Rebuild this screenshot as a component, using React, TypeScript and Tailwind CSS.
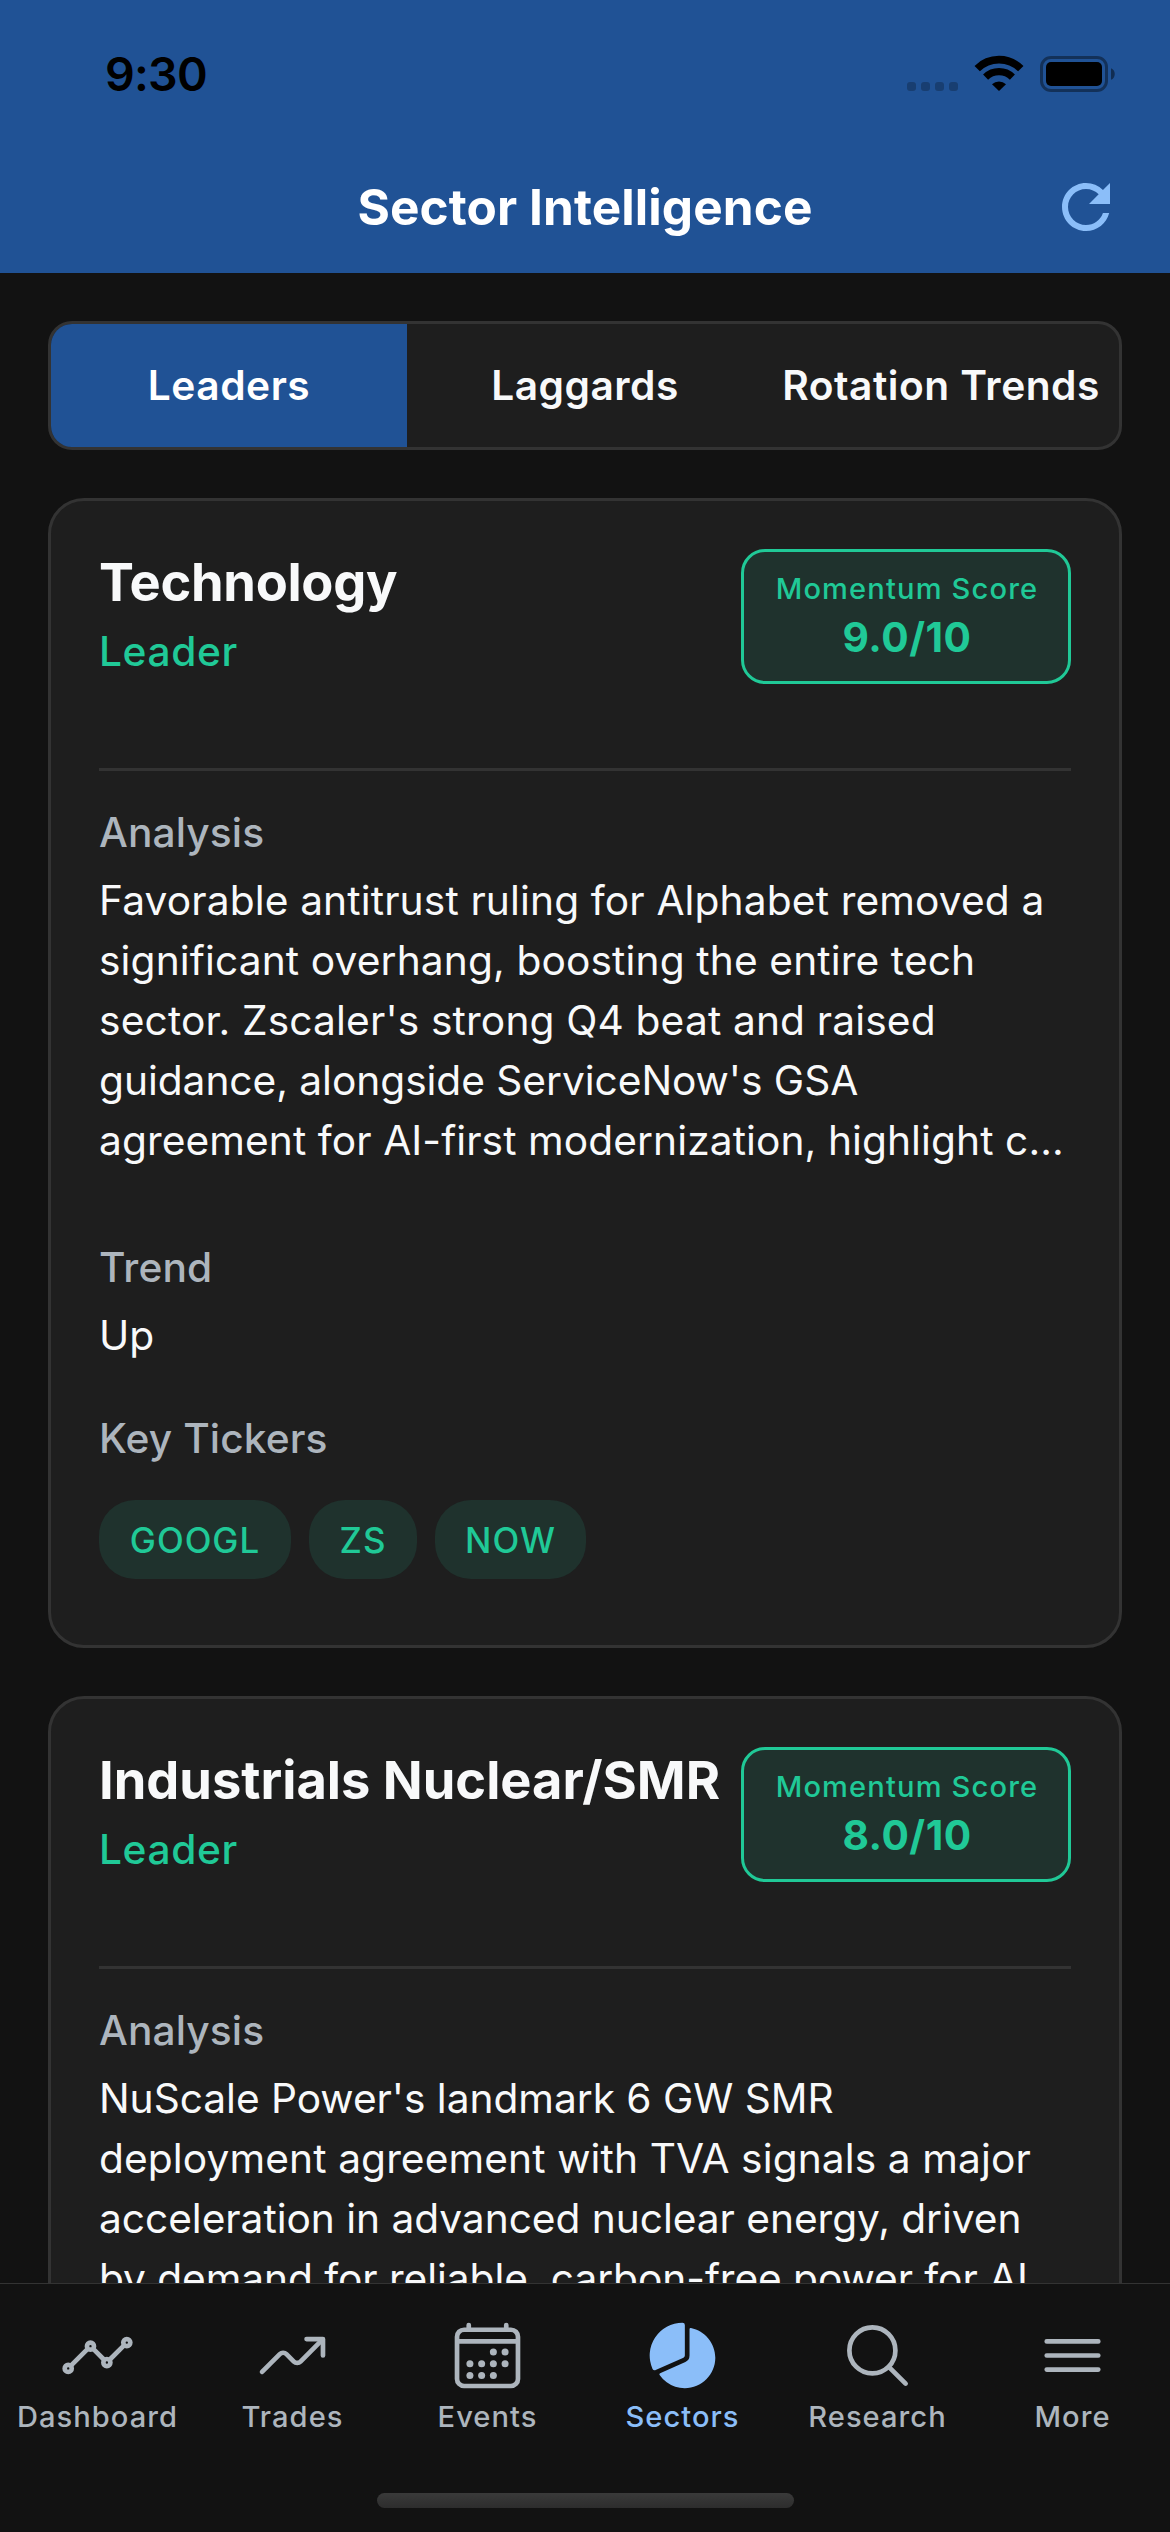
import type { ReactNode } from "react";
import {
  IoAnalyticsOutline,
  IoCalendarOutline,
  IoMenuOutline,
  IoPieChart,
  IoSearchOutline,
  IoTrendingUpOutline,
} from "react-icons/io5";
import { MdRefresh } from "react-icons/md";

type Line = { text: string; spacing: string };
type Ticker = { symbol: string; width: string };
type Sector = {
  name: string;
  nameSpacing: string;
  score: string;
  analysis: Line[];
  trend?: string;
  tickers?: Ticker[];
};

const sectors: Sector[] = [
  {
    name: "Technology",
    nameSpacing: "tracking-[-0.3px]",
    score: "9.0/10",
    analysis: [
      { text: "Favorable antitrust ruling for Alphabet removed a", spacing: "tracking-[0.13px]" },
      { text: "significant overhang, boosting the entire tech", spacing: "tracking-[0.12px]" },
      { text: "sector. Zscaler's strong Q4 beat and raised", spacing: "tracking-[0.15px]" },
      { text: "guidance, alongside ServiceNow's GSA", spacing: "tracking-[-0.05px]" },
      { text: "agreement for AI-first modernization, highlight c...", spacing: "tracking-[0.08px]" },
    ],
    trend: "Up",
    tickers: [
      { symbol: "GOOGL", width: "w-[192px]" },
      { symbol: "ZS", width: "w-[108px]" },
      { symbol: "NOW", width: "w-[151px]" },
    ],
  },
  {
    name: "Industrials Nuclear/SMR",
    nameSpacing: "tracking-[0px]",
    score: "8.0/10",
    analysis: [
      { text: "NuScale Power's landmark 6 GW SMR", spacing: "tracking-[-0.04px]" },
      { text: "deployment agreement with TVA signals a major", spacing: "tracking-[0.1px]" },
      { text: "acceleration in advanced nuclear energy, driven", spacing: "tracking-[-0.05px]" },
      { text: "by demand for reliable, carbon-free power for AI", spacing: "tracking-[-0.07px]" },
    ],
  },
];

function StatusBar() {
  return (
    <div className="flex h-[141px] items-start justify-between pt-[44px] pr-[53px] pl-[105px] text-black">
      <span className="text-[46.6px] leading-[60px] font-semibold tracking-[-0.77px]">9:30</span>
      <div className="flex pt-[11px]">
        <svg className="h-[37px] w-[52px]" viewBox="0 0 52 37" fill="#000" fillOpacity="0.24">
          {[0, 14, 28, 42].map((x) => (
            <rect key={x} x={x} y="27" width="9" height="9" rx="3" />
          ))}
        </svg>
        <svg className="ml-[15px] h-[37px] w-[50px]" viewBox="0 0 50 37" fill="none" stroke="#000">
          <path d="M3.2 13.6A31 31 0 0 1 46.8 13.6" strokeWidth="7.6" />
          <path d="M11.6 22.1A19.2 19.2 0 0 1 38.4 22.1" strokeWidth="7.2" />
          <path d="M18 29.2A10.4 10.4 0 0 1 32 29.2L25 36Z" fill="#000" stroke="none" />
        </svg>
        <svg className="ml-[16px] h-[38px] w-[77px]" viewBox="0 0 77 38">
          <rect x="1.5" y="2.5" width="65" height="33" rx="9.5" fill="none" stroke="#000" strokeOpacity="0.4" strokeWidth="3" />
          <rect x="6" y="7" width="56" height="24" rx="5" fill="#000" />
          <path d="M71 13.2C76 15 76 23 71 24.8Z" fill="#000" fillOpacity="0.45" />
        </svg>
      </div>
    </div>
  );
}

function Header() {
  return (
    <header className="h-[273px] shrink-0 bg-[#205295]">
      <StatusBar />
      <div className="grid h-[132px] grid-cols-[120px_1fr_120px] items-center">
        <h1 className="col-start-2 text-center text-[49.5px] leading-[66px] font-bold tracking-[0.1px] text-white">
          Sector Intelligence
        </h1>
        <MdRefresh className="size-[72px] text-[#8bbef9]" />
      </div>
    </header>
  );
}

function SegmentedControl() {
  return (
    <div className="grid h-[129px] shrink-0 grid-cols-3 items-stretch overflow-hidden rounded-[24px] border-[3px] border-[#333] bg-[#1e1e1e] text-[40.7px] font-semibold tracking-[0.5px] whitespace-nowrap text-[#f8f9fa]">
      <button className="bg-[#205295] text-center text-white">Leaders</button>
      <button className="text-center">Laggards</button>
      <button className="text-center">Rotation Trends</button>
    </div>
  );
}

function Label({ children }: { children: ReactNode }) {
  return (
    <h3 className="text-[40.7px] leading-[60px] font-medium tracking-[0.1px] text-[#adb5bd]">{children}</h3>
  );
}

function SectorCard({ sector }: { sector: Sector }) {
  return (
    <section className="h-[1150px] shrink-0 rounded-[36px] border-[3px] border-[#333] bg-[#1e1e1e] px-12 pt-12 text-[#f8f9fa]">
      <div className="flex h-[222px] items-start justify-between border-b-[3px] border-[#333]">
        <div className="whitespace-nowrap">
          <h2 className={`text-[52.4px] leading-[66px] font-bold ${sector.nameSpacing}`}>{sector.name}</h2>
          <p className="mt-[7px] text-[40.7px] leading-[60px] font-medium tracking-[0.6px] text-[#20c997]">Leader</p>
        </div>
        <div className="h-[135px] w-[330px] shrink-0 rounded-[24px] border-[3px] border-[#20c997] bg-[#1f322d] pt-[13px] pl-[2px] text-center text-[#20c997]">
          <div className="text-[29.1px] leading-[48px] font-medium tracking-[1.15px]">Momentum Score</div>
          <div className="mt-px text-[40.7px] leading-[48px] font-bold tracking-[0.5px]">{sector.score}</div>
        </div>
      </div>

      <div className="mt-8">
        <Label>Analysis</Label>
        <div className="mt-2 text-[40.7px] leading-[60px]">
          {sector.analysis.map((line) => (
            <div key={line.text} className={`whitespace-nowrap ${line.spacing}`}>
              {line.text}
            </div>
          ))}
        </div>
      </div>

      {sector.trend && (
        <div className="mt-[67px]">
          <Label>Trend</Label>
          <div className="mt-2 text-[40.7px] leading-[60px]">{sector.trend}</div>
        </div>
      )}

      {sector.tickers && (
        <div className="mt-[43px]">
          <Label>Key Tickers</Label>
          <div className="mt-[31px] flex gap-[18px]">
            {sector.tickers.map((t) => (
              <span
                key={t.symbol}
                className={`flex h-[79px] items-center justify-center rounded-[36px] bg-[#1f322d] pt-px text-[34.9px] font-medium tracking-[1px] text-[#20c997] ${t.width}`}
              >
                {t.symbol}
              </span>
            ))}
          </div>
        </div>
      )}
    </section>
  );
}

const tabs = [
  { label: "Dashboard", Icon: IoAnalyticsOutline, active: false },
  { label: "Trades", Icon: IoTrendingUpOutline, active: false },
  { label: "Events", Icon: IoCalendarOutline, active: false },
  { label: "Sectors", Icon: IoPieChart, active: true },
  { label: "Research", Icon: IoSearchOutline, active: false },
  { label: "More", Icon: IoMenuOutline, active: false },
];

function TabBar() {
  return (
    <nav className="flex h-[249px] shrink-0 flex-col items-center border-t border-[#333] bg-[#121212]">
      <div className="grid h-[209px] w-full grid-cols-6 pt-[34px]">
        {tabs.map(({ label, Icon, active }) => (
          <div
            key={label}
            className={`flex flex-col items-center ${active ? "text-[#8bbef9]" : "text-[#adb5bd]"}`}
          >
            <Icon className="size-[75px]" />
            <span className="mt-1 text-[29.1px] leading-[40px] font-medium tracking-[1.05px]">{label}</span>
          </div>
        ))}
      </div>
      <div className="h-[15px] w-[417px] rounded-full bg-linear-to-b from-[#3a3a3a] to-[#2d2d2d]" />
    </nav>
  );
}

export default function App() {
  return (
    <div className="flex h-[2532px] w-[1170px] flex-col overflow-hidden bg-[#121212] font-[Inter,sans-serif]">
      <Header />
      <main className="flex min-h-0 flex-1 flex-col gap-12 overflow-hidden px-12 pt-12">
        <SegmentedControl />
        {sectors.map((s) => (
          <SectorCard key={s.name} sector={s} />
        ))}
      </main>
      <TabBar />
    </div>
  );
}
